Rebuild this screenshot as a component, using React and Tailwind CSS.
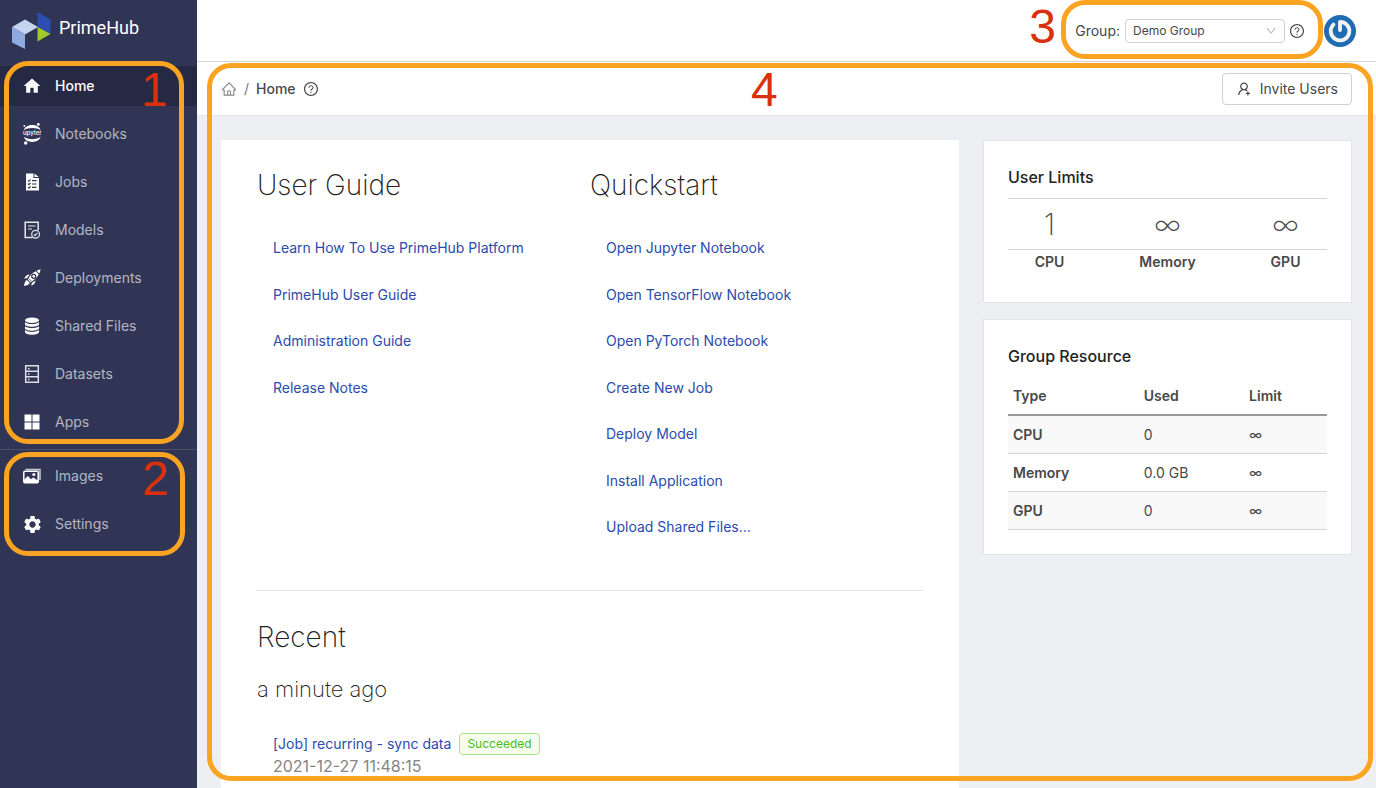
import React from "react";
import {
  AiOutlineHome,
  AiOutlineQuestionCircle,
  AiOutlineUserAdd,
  AiOutlineDown,
} from "react-icons/ai";
import { MdHome, MdSettings } from "react-icons/md";

function Logo() {
  return (
    <svg viewBox="0 0 40 38" className="h-[38px] w-10" aria-hidden="true">
      <path d="M1 15 14 7.500 27 15 14 22.500Z" fill="#c3d4f1" />
      <path d="M1 15 14 22.500V37L1 30.500Z" fill="#8faae0" />
      <path d="M26.500 0 39.500 7.500V22L26.500 15Z" fill="#2e4db0" />
      <path d="M26.500 15 39.500 22 26.500 29.500Z" fill="#a2ca28" />
    </svg>
  );
}

function NotebooksIcon() {
  return (
    <svg viewBox="0 0 24 24" className="size-6" fill="#fff" aria-hidden="true">
      <path d="M3.800 8.200C6 1.400 18.500 1.400 20.700 8.200 17 5.200 7.500 5.200 3.800 8.200Z" />
      <path d="M3.800 14.700C6 21.600 18.500 21.600 20.700 14.700 17 18 7.500 18 3.800 14.700Z" />
      <circle cx="18.300" cy="2.400" r="1.400" />
      <circle cx="4.300" cy="3.900" r=".9" />
      <circle cx="5.700" cy="21" r="1.700" />
      <text
        x="12.300"
        y="13"
        textAnchor="middle"
        className="font-[Inter,sans-serif] text-[6px] font-medium"
      >
        upyter
      </text>
    </svg>
  );
}

function JobsIcon() {
  return (
    <svg viewBox="0 0 18 18" className="size-[18px]" aria-hidden="true">
      <path d="M3 .5H10.500V5H16V17.500H3Z" fill="#fff" />
      <path d="M11.500.5 15.700 4H11.500Z" fill="#fff" />
      <g stroke="#313555" fill="none" strokeWidth="1.100">
        <path d="m5 7.300 1 1L7.600 6.500M5 10.700l1 1L7.600 9.900M5 14.100l1 1 1.600-1.800" />
        <path d="M9 7.600h4.500M9 11h4.500M9 14.400h4.500" />
      </g>
    </svg>
  );
}

function ModelsIcon() {
  return (
    <svg viewBox="0 0 18 18" className="size-[18px]" fill="none" stroke="#e6e7ee" aria-hidden="true">
      <path d="M9.500 16.500H2.200V1.200H15.200V9" strokeWidth="1.500" />
      <path d="M5 5h7.500M5 8h4" strokeWidth="1.200" />
      <circle cx="12.600" cy="13.200" r="3.900" strokeWidth="1.200" />
      <path d="m10.800 13.400 1.300 1.300 2.400-2.900" strokeWidth="1.100" />
    </svg>
  );
}

function RocketIcon() {
  return (
    <svg viewBox="0 0 18 18" className="size-[18px]" aria-hidden="true">
      <path d="M17.500.5c-1 0-2.500.4-4 1.300l2.700 2.700c.9-1.500 1.300-3 1.300-4Z" fill="#fff" />
      <path d="M12.700 2.300C10.500 3.400 8.300 5.300 6.700 7.500L4.800 10.500 7.500 13.200 10.500 11.300c2.200-1.600 4.100-3.800 5.200-6Z" fill="#fff" />
      <path d="M6.600 5.600C4.500 5.400 2.600 7 1.200 9.600L4 9.300ZM12.400 11.400c.2 2.100-1.400 4-4 5.400L8.700 14Z" fill="#fff" />
      <path d="M3.900 11.100C2.200 11.800 1.400 14.300 1 17c2.700-.4 5.200-1.200 5.900-2.900Z" fill="#fff" />
      <circle cx="10.700" cy="7.300" r="2" fill="#fff" stroke="#313555" strokeWidth="1.200" />
      <path d="m5.800 9.600 2.600 2.600" stroke="#313555" strokeWidth=".8" />
    </svg>
  );
}

function DiscsIcon() {
  return (
    <svg viewBox="0 0 18 18" className="size-[18px]" fill="#fff" aria-hidden="true">
      <ellipse cx="9" cy="3.300" rx="7" ry="2.800" />
      <path d="M2 4.900c1 1.400 3.800 2.100 7 2.100s6-.7 7-2.100v2.400c0 1.300-3 2.500-7 2.500S2 8.600 2 7.300Z" />
      <path d="M2 8.900c1 1.400 3.800 2.100 7 2.100s6-.7 7-2.100v2.400c0 1.300-3 2.500-7 2.500s-7-1.200-7-2.500Z" />
      <path d="M2 12.800c1 1.400 3.800 2.100 7 2.100s6-.7 7-2.100v2.200c0 1.500-3 2.700-7 2.700S2 16.500 2 15Z" />
    </svg>
  );
}

function DatasetsIcon() {
  return (
    <svg viewBox="0 0 18 18" className="size-[18px]" fill="none" stroke="#dcdde6" aria-hidden="true">
      <path d="M2.700.8h12.600v16.400H2.700ZM2.700 6.300h12.600M2.700 11.700h12.600" strokeWidth="1.500" />
      <path d="M5 3.700h1.500M5 9h1.500M5 14.500h1.500" strokeWidth="1.500" />
    </svg>
  );
}

function AppsIcon() {
  return (
    <svg viewBox="0 0 18 18" className="size-[18px]" fill="#fff" aria-hidden="true">
      <path d="M1.500 1.500h7v7h-7ZM9.500 1.500h7v7h-7ZM1.500 9.500h7v7h-7ZM9.500 9.500h7v7h-7Z" />
    </svg>
  );
}

function ImagesIcon() {
  return (
    <svg viewBox="0 0 18 18" className="size-[18px]" aria-hidden="true">
      <path d="M2.500 2.500H17V13" fill="none" stroke="#c9cad6" strokeWidth="1.500" />
      <rect x=".8" y="4.200" width="14.400" height="11.600" rx="1" fill="none" stroke="#fff" strokeWidth="1.500" />
      <path d="M1 15v-2l3.800-4 3.200 3.300 2.300-1.800 4.700 3V15Z" fill="#fff" />
      <circle cx="10.800" cy="7.600" r="1.500" fill="#fff" />
    </svg>
  );
}

const mainNav = [
  { label: "Home", icon: <MdHome className="size-5 text-white" />, active: true },
  { label: "Notebooks", icon: <NotebooksIcon /> },
  { label: "Jobs", icon: <JobsIcon /> },
  { label: "Models", icon: <ModelsIcon /> },
  { label: "Deployments", icon: <RocketIcon /> },
  { label: "Shared Files", icon: <DiscsIcon /> },
  { label: "Datasets", icon: <DatasetsIcon /> },
  { label: "Apps", icon: <AppsIcon /> },
];

const adminNav = [
  { label: "Images", icon: <ImagesIcon /> },
  { label: "Settings", icon: <MdSettings className="size-[21px] text-white" /> },
];

function NavList({ items }) {
  return (
    <ul className="flex flex-col gap-2">
      {items.map((item) => (
        <li key={item.label}>
          <a
            href="#"
            className={
              item.active
                ? "flex h-10 items-center gap-[11px] bg-[#252943] pl-5 text-sm font-medium text-white"
                : "flex h-10 items-center gap-[11px] pl-5 text-sm text-[#b4b6c2]"
            }
          >
            <span className="flex w-6 shrink-0 items-center justify-center">{item.icon}</span>
            {item.label}
          </a>
        </li>
      ))}
    </ul>
  );
}

function Sidebar() {
  return (
    <aside className="w-[197px] shrink-0 bg-[#313555]">
      <a href="#" className="flex h-[66px] items-start gap-2 pt-3 pl-[11px]">
        <Logo />
        <span className="pt-0.5 font-[Roboto,sans-serif] text-lg text-white">PrimeHub</span>
      </a>
      <nav aria-label="Main">
        <NavList items={mainNav} />
        <hr className="mt-[7px] mb-1.5 border-[#4c4f6a]" />
        <NavList items={adminNav} />
      </nav>
    </aside>
  );
}

function Avatar() {
  return (
    <svg viewBox="0 0 32 32" className="size-8" aria-hidden="true">
      <circle cx="16" cy="16" r="16" fill="#1e6cb3" />
      <path
        d="M16 15V6.800A9.300 9.300 0 1 1 9.500 9.500"
        fill="none"
        stroke="#f2f2f2"
        strokeWidth="3.800"
        strokeLinecap="round"
        strokeLinejoin="round"
      />
    </svg>
  );
}

function TopBar() {
  return (
    <header className="flex h-[62px] items-center justify-end border-b border-[#d4d4d6] bg-white pr-5">
      <label htmlFor="group" className="pr-[5px] text-sm">
        Group:
      </label>
      <div className="relative">
        <select
          id="group"
          className="block h-6 w-40 appearance-none rounded-sm border border-[#d0d0d0] bg-white pl-[7px] text-xs"
        >
          <option>Demo Group</option>
        </select>
        <AiOutlineDown className="pointer-events-none absolute top-1.5 right-2 size-3 text-[#b5b5b5]" />
      </div>
      <button type="button" aria-label="About groups" className="ml-1">
        <AiOutlineQuestionCircle className="size-4" />
      </button>
      <button type="button" aria-label="Account" className="ml-[19px]">
        <Avatar />
      </button>
    </header>
  );
}

function PageBar() {
  return (
    <div className="flex h-[54px] items-center border-b border-[#e6e6e8] bg-white px-6">
      <nav aria-label="Breadcrumb" className="flex items-center gap-[7px] text-sm">
        <a href="#" aria-label="Home">
          <AiOutlineHome className="size-4 text-[#858585]" />
        </a>
        <span className="text-[#777]">/</span>
        <span className="font-medium">Home</span>
        <button type="button" aria-label="Help">
          <AiOutlineQuestionCircle className="size-4" />
        </button>
      </nav>
      <button
        type="button"
        className="ml-auto flex h-8 items-center gap-2 rounded-sm border border-[#cfcfcf] bg-white px-[13px] text-sm"
      >
        <AiOutlineUserAdd className="size-4" />
        Invite Users
      </button>
    </div>
  );
}

const guideLinks = [
  "Learn How To Use PrimeHub Platform",
  "PrimeHub User Guide",
  "Administration Guide",
  "Release Notes",
];

const quickLinks = [
  "Open Jupyter Notebook",
  "Open TensorFlow Notebook",
  "Open PyTorch Notebook",
  "Create New Job",
  "Deploy Model",
  "Install Application",
  "Upload Shared Files...",
];

function LinkColumn({ title, links }) {
  return (
    <section className="flex-1">
      <h2 className="text-[28px] leading-[42px] font-extralight text-[#222]">{title}</h2>
      <ul className="mt-[19px] pl-4">
        {links.map((link) => (
          <li key={link} className="py-3 text-[15px] leading-normal">
            <a href="#" className="text-sm text-[#2b4bad]">
              {link}
            </a>
          </li>
        ))}
      </ul>
    </section>
  );
}

function Guide() {
  return (
    <div className="bg-white px-9 pt-6">
      <div className="flex">
        <LinkColumn title="User Guide" links={guideLinks} />
        <LinkColumn title="Quickstart" links={quickLinks} />
      </div>
      <hr className="mt-[39px] border-[#e4e4e4]" />
      <section className="pt-[25px]">
        <h2 className="text-[28px] leading-[42px] font-extralight text-[#222]">Recent</h2>
        <h3 className="mt-3.5 text-[22px] leading-[34px] font-extralight text-[#222]">
          a minute ago
        </h3>
        <div className="mt-[26px] pl-4">
          <div className="flex items-center gap-2 text-sm">
            <a href="#" className="leading-6 text-[#2b4bad]">
              [Job] recurring - sync data
            </a>
            <span className="rounded-sm border border-[#a9e584] bg-[#f6ffed] px-[7px] text-xs leading-5 text-[#4fb81e]">
              Succeeded
            </span>
          </div>
          <div className="text-base leading-5 text-[#858585]">2021-12-27 11:48:15</div>
        </div>
      </section>
    </div>
  );
}

function UserLimits() {
  return (
    <section className="border border-[#e4e4e6] bg-white p-6 pb-[28px]">
      <h2 className="text-base font-medium text-[#222]">User Limits</h2>
      <table className="mt-[9px] w-full table-fixed text-center">
        <colgroup>
          <col className="w-[26%]" />
          <col />
          <col className="w-[26%]" />
        </colgroup>
        <tbody>
          <tr className="border-y border-[#d4d4d4] text-[30px] leading-[50px] font-extralight">
            <td className="p-0">1</td>
            <td className="p-0">∞</td>
            <td className="p-0">∞</td>
          </tr>
          <tr className="text-sm leading-6">
            <th className="p-0 font-semibold">CPU</th>
            <th className="p-0 font-semibold">Memory</th>
            <th className="p-0 font-semibold">GPU</th>
          </tr>
        </tbody>
      </table>
    </section>
  );
}

const resources = [
  { type: "CPU", used: "0", limit: "∞" },
  { type: "Memory", used: "0.0 GB", limit: "∞" },
  { type: "GPU", used: "0", limit: "∞" },
];

function GroupResource() {
  return (
    <section className="border border-[#e4e4e6] bg-white p-6">
      <h2 className="text-base font-medium text-[#222]">Group Resource</h2>
      <table className="mt-2 w-full table-fixed text-left text-sm">
        <thead>
          <tr className="h-[39px] border-b-2 border-[#999]">
            <th className="w-[41%] px-[5px] pt-0.5 font-semibold">Type</th>
            <th className="w-[33%] px-[5px] pt-0.5 font-semibold">Used</th>
            <th className="px-[5px] pt-0.5 font-semibold">Limit</th>
          </tr>
        </thead>
        <tbody>
          {resources.map((row) => (
            <tr key={row.type} className="h-[38px] border-b border-[#d4d4d4] odd:bg-[#f9f9f9]">
              <th className="px-[5px] pt-0.5 font-semibold">{row.type}</th>
              <td className="px-[5px] pt-0.5">{row.used}</td>
              <td className="px-[5px] pt-0.5">{row.limit}</td>
            </tr>
          ))}
        </tbody>
      </table>
    </section>
  );
}

// Numbered outlines that float over the page and mark its four regions.
function Callouts() {
  return (
    <div className="pointer-events-none absolute inset-0 font-['Liberation_Sans',sans-serif] text-5xl leading-none text-[#d9300d]">
      <div className="absolute top-[61px] left-1 h-[383px] w-[180px] rounded-3xl border-[5px] border-[#faa421]" />
      <span className="absolute top-[66px] left-[141px]">1</span>
      <div className="absolute top-[452px] left-1 h-[104px] w-[181px] rounded-3xl border-[5px] border-[#faa421]" />
      <span className="absolute top-[455px] left-[142px]">2</span>
      <div className="absolute top-0 right-[53px] h-[59px] w-[262px] rounded-3xl border-[5px] border-[#faa421]" />
      <span className="absolute top-[3px] right-[320px]">3</span>
      <div className="absolute top-[63px] right-[3px] bottom-[7px] left-[207px] rounded-3xl border-[5px] border-[#faa421]" />
      <span className="absolute top-[66px] left-[751px]">4</span>
    </div>
  );
}

export default function App() {
  return (
    <div className="relative flex min-h-screen bg-[#eeeff3] font-[Inter,'Liberation_Sans',sans-serif] text-[#484848]">
      <Sidebar />
      <div className="flex min-w-0 flex-1 flex-col">
        <TopBar />
        <PageBar />
        <main className="grid flex-1 grid-cols-[2fr_1fr] gap-6 px-6 pt-6">
          <Guide />
          <div className="flex flex-col gap-4">
            <UserLimits />
            <GroupResource />
          </div>
        </main>
      </div>
      <Callouts />
    </div>
  );
}
